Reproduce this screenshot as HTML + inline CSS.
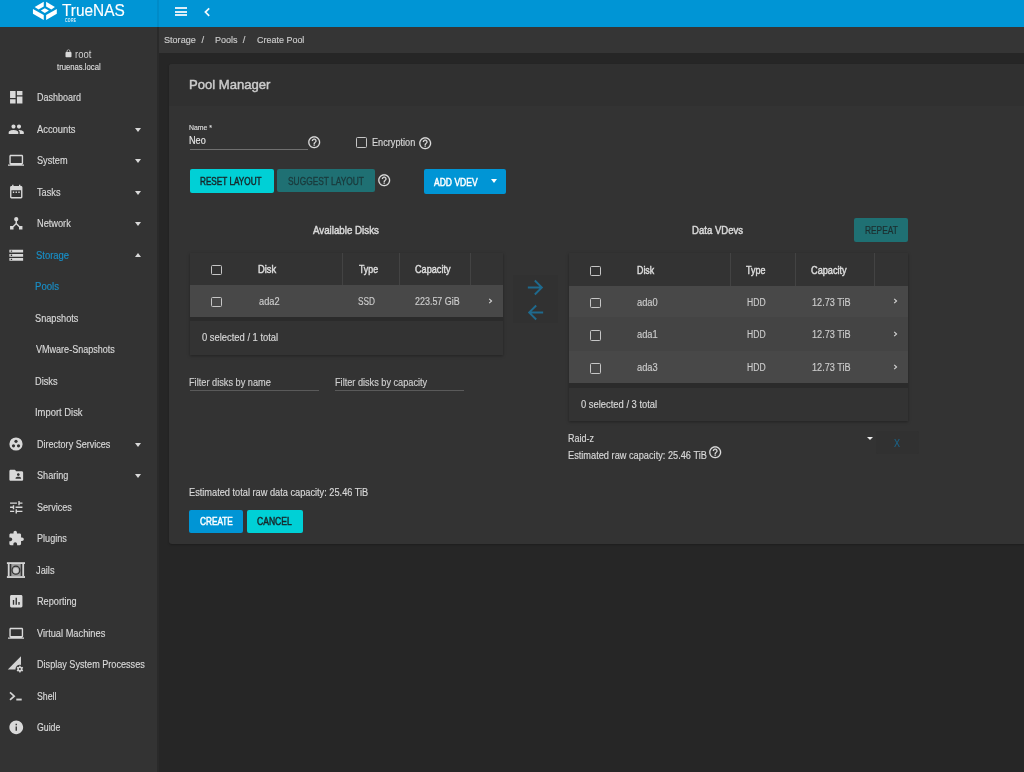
<!DOCTYPE html>
<html><head><meta charset="utf-8">
<style>
*{margin:0;padding:0;box-sizing:border-box}
html,body{width:1024px;height:772px;overflow:hidden;background:#262626;font-family:"Liberation Sans",sans-serif;}
.a{position:absolute;white-space:nowrap}
.r{position:absolute}
</style></head><body><div class="r" style="left:0;top:0;width:1024px;height:772px;will-change:transform">
<div class="r" style="left:0px;top:0px;width:1024px;height:27px;background:#0095d5;"></div>
<div class="r" style="left:0px;top:26.5px;width:1024px;height:1px;background:#2e2a2a;"></div>
<div class="r" style="left:157px;top:0px;width:1.5px;height:26.5px;background:#008bc8;"></div>
<div class="r" style="left:0px;top:27px;width:157px;height:745px;background:#333333;"></div>
<div class="r" style="left:157px;top:27px;width:1.5px;height:745px;background:#2a2a2a;"></div>
<div class="r" style="left:158.5px;top:27px;width:866px;height:25.8px;background:#353535;"></div>
<div class="r" style="left:168.5px;top:64px;width:900px;height:480px;background:#333333;border-radius:3px;box-shadow:0 1px 2px rgba(0,0,0,.25)"></div>
<div class="r" style="left:168.5px;top:64px;width:900px;height:41.5px;background:#303030;border-radius:3px 3px 0 0"></div>
<svg class="a" style="left:0;top:0" width="60" height="22" viewBox="0 0 60 22"><g fill="#ffffff">
<path d="M43.77 1.76 L34.69 7.03 L38.5 9.38 L43.77 6.59 Z"/>
<path d="M46.1 1.76 L54.9 7.03 L51.4 9.38 L46.1 6.59 Z"/>
<path d="M40.84 10.55 L44.8 8.35 L48.9 10.55 L44.8 12.9 Z"/>
<path d="M32.93 9.08 L43.77 14.94 L43.77 19.92 L32.93 13.77 Z"/>
<path d="M46.1 14.94 L56.8 9.08 L56.8 13.77 L46.1 19.92 Z"/>
</g></svg>
<div id="t0" class="a" style="left:62.00px;top:1.6999999999999993px;font-size:17px;line-height:17px;color:#ffffff;font-weight:normal;-webkit-text-stroke:0.15px #ffffff;transform:scaleX(0.9058);transform-origin:0 0;">TrueNAS</div>
<div class="a" style="left:65px;top:18.6px;font-size:8px;line-height:8px;font-weight:bold;color:#d8eef9;letter-spacing:0.6px;transform:scale(0.45,0.58);transform-origin:0 0">CORE</div>
<div class="r" style="left:175px;top:7px;width:12px;height:2px;background:#dcedf7;"></div>
<div class="r" style="left:175px;top:10.6px;width:12px;height:2px;background:#dcedf7;"></div>
<div class="r" style="left:175px;top:14px;width:12px;height:2px;background:#dcedf7;"></div>
<svg class="a" style="left:203px;top:6.5px" width="8" height="10" viewBox="0 0 8 10"><path d="M6.2 1.4 L2.4 5.1 L6.2 8.8" stroke="#f4f9fc" stroke-width="1.7" fill="none"/></svg>
<div id="t1" class="a" style="left:163.83px;top:34.9px;font-size:9.5px;line-height:9.5px;color:#cccccc;font-weight:normal;-webkit-text-stroke:0.15px #cccccc;transform:scaleX(0.9545);transform-origin:0 0;">Storage</div>
<div id="t2" class="a" style="left:201.40px;top:34.9px;font-size:9.5px;line-height:9.5px;color:#cccccc;font-weight:normal;-webkit-text-stroke:0.15px #cccccc;">/</div>
<div id="t3" class="a" style="left:215.00px;top:34.9px;font-size:9.5px;line-height:9.5px;color:#cccccc;font-weight:normal;-webkit-text-stroke:0.15px #cccccc;transform:scaleX(0.9500);transform-origin:0 0;">Pools</div>
<div id="t4" class="a" style="left:242.80px;top:34.9px;font-size:9.5px;line-height:9.5px;color:#cccccc;font-weight:normal;-webkit-text-stroke:0.15px #cccccc;">/</div>
<div id="t5" class="a" style="left:256.81px;top:34.9px;font-size:9.5px;line-height:9.5px;color:#cccccc;font-weight:normal;-webkit-text-stroke:0.15px #cccccc;transform:scaleX(0.9440);transform-origin:0 0;">Create Pool</div>
<svg class="a" style="left:64px;top:49px;" width="9" height="9" viewBox="0 0 24 24"><path fill="#d9d9d9" d="M18 8h-1V6c0-2.76-2.24-5-5-5S7 3.24 7 6v2H6c-1.1 0-2 .9-2 2v10c0 1.1.9 2 2 2h12c1.1 0 2-.9 2-2V10c0-1.1-.9-2-2-2zm-3.1 0H9.1V6c0-1.71 1.39-3.1 2.9-3.1 1.71 0 2.9 1.39 2.9 3.1v2z"/></svg>
<div id="t6" class="a" style="left:75.00px;top:50px;font-size:10px;line-height:10px;color:#d0d0d0;font-weight:normal;-webkit-text-stroke:0.15px #d0d0d0;transform:scaleX(0.9471);transform-origin:0 0;-webkit-text-stroke:0">root</div>
<div id="t7" class="a" style="left:56.53px;top:62.8px;font-size:9px;line-height:9px;color:#dddddd;font-weight:normal;-webkit-text-stroke:0.15px #dddddd;transform:scaleX(0.8569);transform-origin:0 0;">truenas.local</div>
<div id="t8" class="a" style="left:36.81px;top:93.3px;font-size:10px;line-height:10px;color:#d9d9d9;font-weight:normal;-webkit-text-stroke:0.15px #d9d9d9;transform:scaleX(0.9000);transform-origin:0 0;">Dashboard</div>
<svg class="a" style="left:7.8px;top:89.3px;" width="16.5" height="16.5" viewBox="0 0 24 24"><path fill="#d9d9d9" d="M3 13h8V3H3v10zm0 8h8v-6H3v6zm10 0h8V11h-8v10zm0-18v6h8V3h-8z"/></svg>
<div id="t9" class="a" style="left:36.81px;top:124.80000000000001px;font-size:10px;line-height:10px;color:#d9d9d9;font-weight:normal;-webkit-text-stroke:0.15px #d9d9d9;transform:scaleX(0.9366);transform-origin:0 0;">Accounts</div>
<svg class="a" style="left:7.8px;top:120.80000000000001px;" width="16.5" height="16.5" viewBox="0 0 24 24"><path fill="#d9d9d9" d="M16 11c1.66 0 2.99-1.34 2.99-3S17.66 5 16 5c-1.66 0-3 1.34-3 3s1.34 3 3 3zm-8 0c1.66 0 2.99-1.34 2.99-3S9.66 5 8 5C6.34 5 5 6.34 5 8s1.34 3 3 3zm0 2c-2.33 0-7 1.17-7 3.5V19h14v-2.5c0-2.330-4.67-3.5-7-3.5zm8 0c-.29 0-.62.02-.97.05 1.16.84 1.97 1.97 1.97 3.45V19h6v-2.5c0-2.33-4.67-3.5-7-3.5z"/></svg>
<div class="r" style="left:134.8px;top:127.60000000000001px;width:0;height:0;border-left:3.7px solid transparent;border-right:3.7px solid transparent;border-top:4.0px solid #d9d9d9"></div>
<div id="t10" class="a" style="left:36.81px;top:156.3px;font-size:10px;line-height:10px;color:#d9d9d9;font-weight:normal;-webkit-text-stroke:0.15px #d9d9d9;transform:scaleX(0.9182);transform-origin:0 0;">System</div>
<svg class="a" style="left:7.8px;top:152.3px;" width="16.5" height="16.5" viewBox="0 0 24 24"><path fill="#d9d9d9" d="M20 18c1.1 0 1.99-.9 1.99-2L22 6c0-1.1-.9-2-2-2H4c-1.1 0-2 .9-2 2v10c0 1.1.9 2 2 2H0v2h24v-2h-4zM4 6h16v10H4V6z"/></svg>
<div class="r" style="left:134.8px;top:159.10000000000002px;width:0;height:0;border-left:3.7px solid transparent;border-right:3.7px solid transparent;border-top:4.0px solid #d9d9d9"></div>
<div id="t11" class="a" style="left:36.81px;top:187.8px;font-size:10px;line-height:10px;color:#d9d9d9;font-weight:normal;-webkit-text-stroke:0.15px #d9d9d9;transform:scaleX(0.9212);transform-origin:0 0;">Tasks</div>
<svg class="a" style="left:7.8px;top:183.8px;" width="16.5" height="16.5" viewBox="0 0 24 24"><path fill="#d9d9d9" d="M19 3h-1V1h-2v2H8V1H6v2H5c-1.11 0-2 .9-2 2v14c0 1.1.89 2 2 2h14c1.1 0 2-.9 2-2V5c0-1.1-.9-2-2-2zm0 16H5V9h14v10zM7 11h2v2H7zm4 0h2v2h-2zm4 0h2v2h-2z"/></svg>
<div class="r" style="left:134.8px;top:190.60000000000002px;width:0;height:0;border-left:3.7px solid transparent;border-right:3.7px solid transparent;border-top:4.0px solid #d9d9d9"></div>
<div id="t12" class="a" style="left:36.81px;top:219.3px;font-size:10px;line-height:10px;color:#d9d9d9;font-weight:normal;-webkit-text-stroke:0.15px #d9d9d9;transform:scaleX(0.9216);transform-origin:0 0;">Network</div>
<svg class="a" style="left:7.8px;top:215.3px;" width="16.5" height="16.5" viewBox="0 0 24 24"><path fill="#d9d9d9" d="M17 16l-4-4V8.82C14.16 8.4 15 7.3 15 6c0-1.66-1.34-3-3-3S9 4.34 9 6c0 1.3.84 2.4 2 2.82V12l-4 4H3v5h5v-3.05l4-4.2 4 4.2V21h5v-5h-4z"/></svg>
<div class="r" style="left:134.8px;top:222.10000000000002px;width:0;height:0;border-left:3.7px solid transparent;border-right:3.7px solid transparent;border-top:4.0px solid #d9d9d9"></div>
<div id="t13" class="a" style="left:35.86px;top:250.8px;font-size:10px;line-height:10px;color:#1890c9;font-weight:normal;-webkit-text-stroke:0.15px #1890c9;transform:scaleX(0.9455);transform-origin:0 0;">Storage</div>
<svg class="a" style="left:7.8px;top:246.8px;" width="16.5" height="16.5" viewBox="0 0 24 24"><path fill="#d9d9d9" d="M2 20h20v-4H2v4zm2-3h2v2H4v-2zM2 4v4h20V4H2zm4 3H4V5h2v2zm-4 7h20v-4H2v4zm2-3h2v2H4v-2z"/></svg>
<div class="r" style="left:134.8px;top:253.20000000000002px;width:0;height:0;border-left:3.7px solid transparent;border-right:3.7px solid transparent;border-bottom:4.0px solid #d9d9d9"></div>
<div id="t14" class="a" style="left:35.22px;top:282.3px;font-size:10px;line-height:10px;color:#1890c9;font-weight:normal;-webkit-text-stroke:0.15px #1890c9;transform:scaleX(0.9583);transform-origin:0 0;">Pools</div>
<div id="t15" class="a" style="left:35.23px;top:313.8px;font-size:10px;line-height:10px;color:#d9d9d9;font-weight:normal;-webkit-text-stroke:0.15px #d9d9d9;transform:scaleX(0.9191);transform-origin:0 0;">Snapshots</div>
<div id="t16" class="a" style="left:36.14px;top:345.3px;font-size:10px;line-height:10px;color:#d9d9d9;font-weight:normal;-webkit-text-stroke:0.15px #d9d9d9;transform:scaleX(0.9034);transform-origin:0 0;">VMware-Snapshots</div>
<div id="t17" class="a" style="left:35.23px;top:376.8px;font-size:10px;line-height:10px;color:#d9d9d9;font-weight:normal;-webkit-text-stroke:0.15px #d9d9d9;transform:scaleX(0.9250);transform-origin:0 0;">Disks</div>
<div id="t18" class="a" style="left:35.22px;top:408.3px;font-size:10px;line-height:10px;color:#d9d9d9;font-weight:normal;-webkit-text-stroke:0.15px #d9d9d9;transform:scaleX(0.9400);transform-origin:0 0;">Import Disk</div>
<div id="t19" class="a" style="left:36.81px;top:439.8px;font-size:10px;line-height:10px;color:#d9d9d9;font-weight:normal;-webkit-text-stroke:0.15px #d9d9d9;transform:scaleX(0.9037);transform-origin:0 0;">Directory Services</div>
<svg class="a" style="left:8.5px;top:436.8px" width="14" height="14" viewBox="0 0 14 14"><circle cx="7" cy="7" r="6.6" fill="#d9d9d9"/><circle cx="7" cy="4.3" r="1.6" fill="#333"/><circle cx="4.5" cy="8.8" r="1.6" fill="#333"/><circle cx="9.5" cy="8.8" r="1.6" fill="#333"/></svg>
<div class="r" style="left:134.8px;top:442.6px;width:0;height:0;border-left:3.7px solid transparent;border-right:3.7px solid transparent;border-top:4.0px solid #d9d9d9"></div>
<div id="t20" class="a" style="left:36.81px;top:471.3px;font-size:10px;line-height:10px;color:#d9d9d9;font-weight:normal;-webkit-text-stroke:0.15px #d9d9d9;transform:scaleX(0.9118);transform-origin:0 0;">Sharing</div>
<svg class="a" style="left:7.8px;top:467.3px;" width="16.5" height="16.5" viewBox="0 0 24 24"><path fill="#d9d9d9" d="M20 6h-8l-2-2H4c-1.1 0-1.99.9-1.99 2L2 18c0 1.1.9 2 2 2h16c1.1 0 2-.9 2-2V8c0-1.1-.9-2-2-2zm-5 3c1.1 0 2 .9 2 2s-.9 2-2 2-2-.9-2-2 .9-2 2-2zm4 8h-8v-1c0-1.33 2.67-2 4-2s4 .67 4 2v1z"/></svg>
<div class="r" style="left:134.8px;top:474.1px;width:0;height:0;border-left:3.7px solid transparent;border-right:3.7px solid transparent;border-top:4.0px solid #d9d9d9"></div>
<div id="t21" class="a" style="left:36.81px;top:502.8px;font-size:10px;line-height:10px;color:#d9d9d9;font-weight:normal;-webkit-text-stroke:0.15px #d9d9d9;transform:scaleX(0.9079);transform-origin:0 0;">Services</div>
<svg class="a" style="left:7.8px;top:498.8px;" width="16.5" height="16.5" viewBox="0 0 24 24"><path fill="#d9d9d9" d="M3 17v2h6v-2H3zM3 5v2h10V5H3zm10 16v-2h8v-2h-8v-2h-2v6h2zM7 9v2H3v2h4v2h2V9H7zm14 4v-2H11v2h10zm-6-4h2V7h4V5h-4V3h-2v6z"/></svg>
<div id="t22" class="a" style="left:36.81px;top:534.3px;font-size:10px;line-height:10px;color:#d9d9d9;font-weight:normal;-webkit-text-stroke:0.15px #d9d9d9;transform:scaleX(0.9091);transform-origin:0 0;">Plugins</div>
<svg class="a" style="left:7.8px;top:530.3px;" width="16.5" height="16.5" viewBox="0 0 24 24"><path fill="#d9d9d9" d="M20.5 11H19V7c0-1.1-.9-2-2-2h-4V3.5C13 2.12 11.88 1 10.5 1S8 2.120 8 3.5V5H4c-1.1 0-1.99.9-1.99 2v3.8H3.5c1.49 0 2.7 1.21 2.7 2.7s-1.21 2.7-2.7 2.7H2V20c0 1.1.9 2 2 2h3.8v-1.5c0-1.49 1.21-2.7 2.7-2.7 1.49 0 2.7 1.21 2.7 2.7V22H17c1.1 0 2-.9 2-2v-4h1.5c1.38 0 2.5-1.12 2.5-2.5S21.88 11 20.5 11z"/></svg>
<div id="t23" class="a" style="left:35.77px;top:565.8px;font-size:10px;line-height:10px;color:#d9d9d9;font-weight:normal;-webkit-text-stroke:0.15px #d9d9d9;transform:scaleX(0.9286);transform-origin:0 0;">Jails</div>
<svg class="a" style="left:0;top:559.8px" width="30" height="22" viewBox="0 559.8 30 22"><g fill="#d4d4d4">
<rect x="6.9" y="562" width="18.1" height="1.8"/><rect x="6.9" y="575.9" width="18.1" height="1.85"/>
<rect x="7.8" y="563.8" width="1.8" height="12.1"/><rect x="22.3" y="563.8" width="1.8" height="12.1"/>
<rect x="11.3" y="563.8" width="9.4" height="12.1" fill="#9c9c9c"/></g>
<ellipse cx="15.9" cy="570" rx="3.9" ry="4.0" fill="none" stroke="#2e2e2e" stroke-width="1.2"/>
<circle cx="15.8" cy="570.3" r="2.7" fill="#d0d0d0"/>
</svg>
<div id="t24" class="a" style="left:36.81px;top:597.3px;font-size:10px;line-height:10px;color:#d9d9d9;font-weight:normal;-webkit-text-stroke:0.15px #d9d9d9;transform:scaleX(0.9151);transform-origin:0 0;">Reporting</div>
<svg class="a" style="left:7.8px;top:593.3px;" width="16.5" height="16.5" viewBox="0 0 24 24"><path fill="#d9d9d9" d="M19 3H5c-1.1 0-2 .9-2 2v14c0 1.1.9 2 2 2h14c1.1 0 2-.9 2-2V5c0-1.1-.9-2-2-2zM9 17H7v-7h2v7zm4 0h-2V7h2v10zm4 0h-2v-4h2v4z"/></svg>
<div id="t25" class="a" style="left:36.81px;top:628.8px;font-size:10px;line-height:10px;color:#d9d9d9;font-weight:normal;-webkit-text-stroke:0.15px #d9d9d9;transform:scaleX(0.9257);transform-origin:0 0;">Virtual Machines</div>
<svg class="a" style="left:7.8px;top:624.8px;" width="16.5" height="16.5" viewBox="0 0 24 24"><path fill="#d9d9d9" d="M20 18c1.1 0 1.99-.9 1.99-2L22 6c0-1.1-.9-2-2-2H4c-1.1 0-2 .9-2 2v10c0 1.1.9 2 2 2H0v2h24v-2h-4zM4 6h16v10H4V6z"/></svg>
<div id="t26" class="a" style="left:36.81px;top:660.3px;font-size:10px;line-height:10px;color:#d9d9d9;font-weight:normal;-webkit-text-stroke:0.15px #d9d9d9;transform:scaleX(0.9102);transform-origin:0 0;">Display System Processes</div>
<svg class="a" style="left:0;top:654.3px" width="30" height="22" viewBox="0 654.3 30 22">
<path fill="#d4d4d4" d="M7.8 669.7 L21 656.5 L21 669.7 Z"/>
<circle cx="19.9" cy="669.4" r="4.4" fill="#333333"/>
<g fill="#d4d4d4" transform="translate(19.9 669.4)">
<circle r="2.6"/><rect x="-0.7" y="-3.4" width="1.4" height="6.8"/><rect x="-0.7" y="-3.4" width="1.4" height="6.8" transform="rotate(60)"/><rect x="-0.7" y="-3.4" width="1.4" height="6.8" transform="rotate(120)"/>
</g><circle cx="19.9" cy="669.4" r="1.0" fill="#333333"/>
</svg>
<div id="t27" class="a" style="left:36.81px;top:691.8px;font-size:10px;line-height:10px;color:#d9d9d9;font-weight:normal;-webkit-text-stroke:0.15px #d9d9d9;transform:scaleX(0.8773);transform-origin:0 0;">Shell</div>
<svg class="a" style="left:0;top:685.8px" width="30" height="22" viewBox="0 685.8 30 22">
<path d="M10 692.2 L14.2 696 L10 699.7" stroke="#d4d4d4" stroke-width="1.7" fill="none"/>
<rect x="16.3" y="698.4" width="5.4" height="1.9" fill="#d4d4d4"/>
</svg>
<div id="t28" class="a" style="left:36.81px;top:723.3px;font-size:10px;line-height:10px;color:#d9d9d9;font-weight:normal;-webkit-text-stroke:0.15px #d9d9d9;transform:scaleX(0.8741);transform-origin:0 0;">Guide</div>
<svg class="a" style="left:7.8px;top:719.3px;" width="16.5" height="16.5" viewBox="0 0 24 24"><path fill="#d9d9d9" d="M12 2C6.48 2 2 6.48 2 12s4.48 10 10 10 10-4.48 10-10S17.52 2 12 2zm1 15h-2v-6h2v6zm0-8h-2V7h2v2z"/></svg>
<div id="t29" class="a" style="left:189.20px;top:78.3px;font-size:13px;line-height:13px;color:#cccccc;font-weight:normal;-webkit-text-stroke:0.45px #cccccc;transform:scaleX(1.0049);transform-origin:0 0;">Pool Manager</div>
<div id="t30" class="a" style="left:189.42px;top:124.19999999999999px;font-size:7.5px;line-height:7.5px;color:#dddddd;font-weight:normal;-webkit-text-stroke:0.15px #dddddd;transform:scaleX(0.9200);transform-origin:0 0;">Name *</div>
<div id="t31" class="a" style="left:189.43px;top:136.2px;font-size:10px;line-height:10px;color:#e6e6e6;font-weight:normal;-webkit-text-stroke:0.15px #e6e6e6;transform:scaleX(0.9111);transform-origin:0 0;">Neo</div>
<div class="r" style="left:189.5px;top:148.8px;width:118px;height:1px;background:#707070;"></div>
<svg class="a" style="left:307px;top:134.8px;" width="14.4" height="14.4" viewBox="0 0 24 24"><path fill="#dddddd" stroke="#dddddd" stroke-width="0.25" d="M11 18h2v-2h-2v2zm1-16C6.48 2 2 6.48 2 12s4.48 10 10 10 10-4.480 10-10S17.52 2 12 2zm0 18c-4.41 0-8-3.59-8-8s3.59-8 8-8 8 3.59 8 8-3.59 8-8 8zm0-14c-2.21 0-4 1.79-4 4h2c0-1.1.9-2 2-2s2 .9 2 2c0 2-3 1.75-3 5h2c0-2.25 3-2.5 3-5 0-2.21-1.79-4-4-4z"/></svg>
<div class="r" style="left:356px;top:137px;width:10.5px;height:10.5px;border:1.8px solid #c6c6c6;border-radius:1.5px"></div>
<div id="t32" class="a" style="left:372.04px;top:138px;font-size:10px;line-height:10px;color:#d9d9d9;font-weight:normal;-webkit-text-stroke:0.15px #d9d9d9;transform:scaleX(0.9149);transform-origin:0 0;">Encryption</div>
<svg class="a" style="left:417.8px;top:136.3px;" width="14.4" height="14.4" viewBox="0 0 24 24"><path fill="#dddddd" stroke="#dddddd" stroke-width="0.25" d="M11 18h2v-2h-2v2zm1-16C6.48 2 2 6.48 2 12s4.48 10 10 10 10-4.480 10-10S17.52 2 12 2zm0 18c-4.41 0-8-3.59-8-8s3.59-8 8-8 8 3.59 8 8-3.59 8-8 8zm0-14c-2.21 0-4 1.79-4 4h2c0-1.1.9-2 2-2s2 .9 2 2c0 2-3 1.75-3 5h2c0-2.25 3-2.5 3-5 0-2.21-1.79-4-4-4z"/></svg>
<div class="r" style="left:189.5px;top:169px;width:84.5px;height:23.5px;background:#00d0d6;border-radius:2px"></div>
<div id="t33" class="a" style="left:200.00px;top:176.6px;font-size:10px;line-height:10px;color:#17262a;font-weight:normal;-webkit-text-stroke:0.45px #17262a;transform:scaleX(0.8182);transform-origin:0 0;">RESET LAYOUT</div>
<div class="r" style="left:277.2px;top:168.8px;width:97.5px;height:23.5px;background:#1f7073;border-radius:2px"></div>
<div id="t34" class="a" style="left:287.63px;top:176.6px;font-size:10px;line-height:10px;color:#1a3a3c;font-weight:normal;-webkit-text-stroke:0.3px #1a3a3c;transform:scaleX(0.8370);transform-origin:0 0;">SUGGEST LAYOUT</div>
<svg class="a" style="left:377px;top:173px;" width="14.4" height="14.4" viewBox="0 0 24 24"><path fill="#dddddd" stroke="#dddddd" stroke-width="0.25" d="M11 18h2v-2h-2v2zm1-16C6.48 2 2 6.48 2 12s4.48 10 10 10 10-4.480 10-10S17.52 2 12 2zm0 18c-4.41 0-8-3.59-8-8s3.59-8 8-8 8 3.59 8 8-3.59 8-8 8zm0-14c-2.21 0-4 1.79-4 4h2c0-1.1.9-2 2-2s2 .9 2 2c0 2-3 1.75-3 5h2c0-2.25 3-2.5 3-5 0-2.21-1.79-4-4-4z"/></svg>
<div class="r" style="left:423.8px;top:169px;width:82.3px;height:25px;background:#0095d5;border-radius:2px"></div>
<div id="t35" class="a" style="left:434.00px;top:177.6px;font-size:10px;line-height:10px;color:#ffffff;font-weight:normal;-webkit-text-stroke:0.45px #ffffff;transform:scaleX(0.8529);transform-origin:0 0;">ADD VDEV</div>
<div class="r" style="left:490.8px;top:179.4px;width:0;height:0;border-left:3.8px solid transparent;border-right:3.8px solid transparent;border-top:4.0px solid #ffffff"></div>
<div id="t36" class="a" style="left:313.00px;top:226px;font-size:10px;line-height:10px;color:#d9d9d9;font-weight:normal;-webkit-text-stroke:0.45px #d9d9d9;transform:scaleX(0.9743);transform-origin:0 0;">Available Disks</div>
<div id="t37" class="a" style="left:691.51px;top:226px;font-size:10px;line-height:10px;color:#d9d9d9;font-weight:normal;-webkit-text-stroke:0.45px #d9d9d9;transform:scaleX(0.9575);transform-origin:0 0;">Data VDevs</div>
<div class="r" style="left:854px;top:218.3px;width:54px;height:23.4px;background:#1f7073;border-radius:2px"></div>
<div id="t38" class="a" style="left:864.53px;top:225.9px;font-size:10px;line-height:10px;color:#1c2f30;font-weight:normal;-webkit-text-stroke:0.2px #1c2f30;transform:scaleX(0.8359);transform-origin:0 0;">REPEAT</div>
<div class="r" style="left:189.5px;top:252.5px;width:313.2px;height:102.5px;background:#2b2b2b;box-shadow:0 1px 3px rgba(0,0,0,.35)"></div>
<div class="r" style="left:189.5px;top:252.5px;width:313.2px;height:32.10000000000002px;background:#333333;"></div>
<div class="r" style="left:342px;top:252.5px;width:1px;height:32.10000000000002px;background:#434343;"></div>
<div class="r" style="left:399px;top:252.5px;width:1px;height:32.10000000000002px;background:#434343;"></div>
<div class="r" style="left:470px;top:252.5px;width:1px;height:32.10000000000002px;background:#434343;"></div>
<div class="r" style="left:211px;top:264.85px;width:10.5px;height:10.5px;border:1.8px solid #c6c6c6;border-radius:1.5px"></div>
<div id="t39" class="a" style="left:257.84px;top:265.2px;font-size:10px;line-height:10px;color:#dddddd;font-weight:normal;-webkit-text-stroke:0.45px #dddddd;transform:scaleX(0.9368);transform-origin:0 0;">Disk</div>
<div id="t40" class="a" style="left:358.75px;top:265.2px;font-size:10px;line-height:10px;color:#dddddd;font-weight:normal;-webkit-text-stroke:0.45px #dddddd;transform:scaleX(0.8773);transform-origin:0 0;">Type</div>
<div id="t41" class="a" style="left:415.00px;top:265.2px;font-size:10px;line-height:10px;color:#dddddd;font-weight:normal;-webkit-text-stroke:0.45px #dddddd;transform:scaleX(0.9128);transform-origin:0 0;">Capacity</div>
<div class="r" style="left:189.5px;top:284.6px;width:313.2px;height:32.39999999999998px;background:#484848;"></div>
<div class="r" style="left:211px;top:296.70000000000005px;width:10.5px;height:10.5px;border:1.8px solid #c6c6c6;border-radius:1.5px"></div>
<div id="t42" class="a" style="left:258.81px;top:297.1px;font-size:10px;line-height:10px;color:#cccccc;font-weight:normal;-webkit-text-stroke:0.15px #cccccc;transform:scaleX(0.9227);transform-origin:0 0;">ada2</div>
<div id="t43" class="a" style="left:358.45px;top:297.1px;font-size:10px;line-height:10px;color:#cccccc;font-weight:normal;-webkit-text-stroke:0.15px #cccccc;transform:scaleX(0.8250);transform-origin:0 0;">SSD</div>
<div id="t44" class="a" style="left:415.24px;top:297.1px;font-size:10px;line-height:10px;color:#cccccc;font-weight:normal;-webkit-text-stroke:0.15px #cccccc;transform:scaleX(0.8940);transform-origin:0 0;">223.57 GiB</div>
<svg class="a" style="left:487.75px;top:297.6px" width="5" height="6" viewBox="0 0 5 6"><path d="M1.2 0.8 L3.6 3 L1.2 5.2" stroke="#d6d6d6" stroke-width="1.05" fill="none"/></svg>
<div class="r" style="left:189.5px;top:321px;width:313.2px;height:34px;background:#333333;"></div>
<div id="t45" class="a" style="left:202.00px;top:333px;font-size:10px;line-height:10px;color:#d9d9d9;font-weight:normal;-webkit-text-stroke:0.15px #d9d9d9;transform:scaleX(0.9383);transform-origin:0 0;">0 selected / 1 total</div>
<div class="r" style="left:568.75px;top:253px;width:338.75px;height:167.60000000000002px;background:#2b2b2b;box-shadow:0 1px 3px rgba(0,0,0,.35)"></div>
<div class="r" style="left:568.75px;top:253px;width:338.75px;height:33px;background:#333333;"></div>
<div class="r" style="left:730px;top:253px;width:1px;height:33px;background:#434343;"></div>
<div class="r" style="left:795px;top:253px;width:1px;height:33px;background:#434343;"></div>
<div class="r" style="left:874px;top:253px;width:1px;height:33px;background:#434343;"></div>
<div class="r" style="left:590px;top:265.8px;width:10.5px;height:10.5px;border:1.8px solid #c6c6c6;border-radius:1.5px"></div>
<div id="t46" class="a" style="left:637.43px;top:266.15px;font-size:10px;line-height:10px;color:#dddddd;font-weight:normal;-webkit-text-stroke:0.45px #dddddd;transform:scaleX(0.8850);transform-origin:0 0;">Disk</div>
<div id="t47" class="a" style="left:746.33px;top:266.15px;font-size:10px;line-height:10px;color:#dddddd;font-weight:normal;-webkit-text-stroke:0.45px #dddddd;transform:scaleX(0.8955);transform-origin:0 0;">Type</div>
<div id="t48" class="a" style="left:811.00px;top:266.15px;font-size:10px;line-height:10px;color:#dddddd;font-weight:normal;-webkit-text-stroke:0.45px #dddddd;transform:scaleX(0.9179);transform-origin:0 0;">Capacity</div>
<div class="r" style="left:568.75px;top:286px;width:338.75px;height:31.30000000000001px;background:#484848;"></div>
<div class="r" style="left:590px;top:297.55px;width:10.5px;height:10.5px;border:1.8px solid #c6c6c6;border-radius:1.5px"></div>
<div id="t49" class="a" style="left:637.42px;top:297.95px;font-size:10px;line-height:10px;color:#cccccc;font-weight:normal;-webkit-text-stroke:0.15px #cccccc;transform:scaleX(0.9318);transform-origin:0 0;">ada0</div>
<div id="t50" class="a" style="left:746.63px;top:297.95px;font-size:10px;line-height:10px;color:#cccccc;font-weight:normal;-webkit-text-stroke:0.15px #cccccc;transform:scaleX(0.8571);transform-origin:0 0;">HDD</div>
<div id="t51" class="a" style="left:811.62px;top:297.95px;font-size:10px;line-height:10px;color:#cccccc;font-weight:normal;-webkit-text-stroke:0.15px #cccccc;transform:scaleX(0.9119);transform-origin:0 0;">12.73 TiB</div>
<svg class="a" style="left:892.6px;top:298.45px" width="5" height="6" viewBox="0 0 5 6"><path d="M1.2 0.8 L3.6 3 L1.2 5.2" stroke="#d6d6d6" stroke-width="1.05" fill="none"/></svg>
<div class="r" style="left:568.75px;top:317.3px;width:338.75px;height:33.69999999999999px;background:#444444;"></div>
<div class="r" style="left:590px;top:330.05px;width:10.5px;height:10.5px;border:1.8px solid #c6c6c6;border-radius:1.5px"></div>
<div id="t52" class="a" style="left:637.42px;top:330.45px;font-size:10px;line-height:10px;color:#cccccc;font-weight:normal;-webkit-text-stroke:0.15px #cccccc;transform:scaleX(0.9318);transform-origin:0 0;">ada1</div>
<div id="t53" class="a" style="left:746.63px;top:330.45px;font-size:10px;line-height:10px;color:#cccccc;font-weight:normal;-webkit-text-stroke:0.15px #cccccc;transform:scaleX(0.8571);transform-origin:0 0;">HDD</div>
<div id="t54" class="a" style="left:811.62px;top:330.45px;font-size:10px;line-height:10px;color:#cccccc;font-weight:normal;-webkit-text-stroke:0.15px #cccccc;transform:scaleX(0.9119);transform-origin:0 0;">12.73 TiB</div>
<svg class="a" style="left:892.6px;top:330.95px" width="5" height="6" viewBox="0 0 5 6"><path d="M1.2 0.8 L3.6 3 L1.2 5.2" stroke="#d6d6d6" stroke-width="1.05" fill="none"/></svg>
<div class="r" style="left:568.75px;top:351px;width:338.75px;height:32.19999999999999px;background:#484848;"></div>
<div class="r" style="left:590px;top:363.00000000000006px;width:10.5px;height:10.5px;border:1.8px solid #c6c6c6;border-radius:1.5px"></div>
<div id="t55" class="a" style="left:637.42px;top:363.40000000000003px;font-size:10px;line-height:10px;color:#cccccc;font-weight:normal;-webkit-text-stroke:0.15px #cccccc;transform:scaleX(0.9318);transform-origin:0 0;">ada3</div>
<div id="t56" class="a" style="left:746.63px;top:363.40000000000003px;font-size:10px;line-height:10px;color:#cccccc;font-weight:normal;-webkit-text-stroke:0.15px #cccccc;transform:scaleX(0.8571);transform-origin:0 0;">HDD</div>
<div id="t57" class="a" style="left:811.62px;top:363.40000000000003px;font-size:10px;line-height:10px;color:#cccccc;font-weight:normal;-webkit-text-stroke:0.15px #cccccc;transform:scaleX(0.9119);transform-origin:0 0;">12.73 TiB</div>
<svg class="a" style="left:892.6px;top:363.90000000000003px" width="5" height="6" viewBox="0 0 5 6"><path d="M1.2 0.8 L3.6 3 L1.2 5.2" stroke="#d6d6d6" stroke-width="1.05" fill="none"/></svg>
<div class="r" style="left:568.75px;top:387.7px;width:338.75px;height:32.900000000000034px;background:#333333;"></div>
<div id="t58" class="a" style="left:581.00px;top:399.7px;font-size:10px;line-height:10px;color:#d9d9d9;font-weight:normal;-webkit-text-stroke:0.15px #d9d9d9;transform:scaleX(0.9383);transform-origin:0 0;">0 selected / 3 total</div>
<div class="r" style="left:513px;top:274.7px;width:45px;height:48.8px;background:#313131;"></div>
<svg class="a" style="left:523.9px;top:276.4px;" width="23" height="23" viewBox="0 0 24 24"><path fill="#1f6a8e" d="M12 4l-1.41 1.41L16.17 11H4v2h12.17l-5.58 5.59L12 20l8-8z"/></svg>
<svg class="a" style="left:524px;top:301px;" width="23" height="23" viewBox="0 0 24 24"><path fill="#1f6a8e" d="M20 11H7.83l5.59-5.59L12 4l-8 8 8 8 1.41-1.41L7.83 13H20v-2z"/></svg>
<div id="t59" class="a" style="left:189.04px;top:377.6px;font-size:10px;line-height:10px;color:#d0d0d0;font-weight:normal;-webkit-text-stroke:0.15px #d0d0d0;transform:scaleX(0.9205);transform-origin:0 0;">Filter disks by name</div>
<div class="r" style="left:189.5px;top:390px;width:129px;height:1px;background:#5a5a5a;"></div>
<div id="t60" class="a" style="left:335.00px;top:377.6px;font-size:10px;line-height:10px;color:#d0d0d0;font-weight:normal;-webkit-text-stroke:0.15px #d0d0d0;transform:scaleX(0.9158);transform-origin:0 0;">Filter disks by capacity</div>
<div class="r" style="left:335px;top:390px;width:129px;height:1px;background:#5a5a5a;"></div>
<div id="t61" class="a" style="left:568.24px;top:433.8px;font-size:10px;line-height:10px;color:#d9d9d9;font-weight:normal;-webkit-text-stroke:0.15px #d9d9d9;transform:scaleX(0.8964);transform-origin:0 0;">Raid-z</div>
<div class="r" style="left:866.8px;top:436.7px;width:0;height:0;border-left:3.2px solid transparent;border-right:3.2px solid transparent;border-top:3.8px solid #eeeeee"></div>
<div class="r" style="left:875.5px;top:431px;width:43.2px;height:23.3px;background:#313131;border-radius:2px"></div>
<div id="t62" class="a" style="left:894.25px;top:439px;font-size:10px;line-height:10px;color:#1d6285;font-weight:normal;-webkit-text-stroke:0.15px #1d6285;transform:scaleX(0.9000);transform-origin:0 0;">X</div>
<div id="t63" class="a" style="left:568.23px;top:450.5px;font-size:10px;line-height:10px;color:#d9d9d9;font-weight:normal;-webkit-text-stroke:0.15px #d9d9d9;transform:scaleX(0.9220);transform-origin:0 0;">Estimated raw capacity: 25.46 TiB</div>
<svg class="a" style="left:708.3px;top:445px;" width="14.4" height="14.4" viewBox="0 0 24 24"><path fill="#dddddd" stroke="#dddddd" stroke-width="0.25" d="M11 18h2v-2h-2v2zm1-16C6.48 2 2 6.48 2 12s4.48 10 10 10 10-4.480 10-10S17.52 2 12 2zm0 18c-4.41 0-8-3.59-8-8s3.59-8 8-8 8 3.59 8 8-3.59 8-8 8zm0-14c-2.21 0-4 1.79-4 4h2c0-1.1.9-2 2-2s2 .9 2 2c0 2-3 1.75-3 5h2c0-2.25 3-2.5 3-5 0-2.21-1.79-4-4-4z"/></svg>
<div id="t64" class="a" style="left:189.04px;top:487.8px;font-size:10px;line-height:10px;color:#d9d9d9;font-weight:normal;-webkit-text-stroke:0.15px #d9d9d9;transform:scaleX(0.9214);transform-origin:0 0;">Estimated total raw data capacity: 25.46 TiB</div>
<div class="r" style="left:189.2px;top:509.5px;width:54px;height:23.5px;background:#0095d5;border-radius:2px"></div>
<div id="t65" class="a" style="left:200.00px;top:517px;font-size:10px;line-height:10px;color:#ffffff;font-weight:normal;-webkit-text-stroke:0.45px #ffffff;transform:scaleX(0.8250);transform-origin:0 0;">CREATE</div>
<div class="r" style="left:246.8px;top:509.5px;width:56px;height:23.5px;background:#00d0d6;border-radius:2px"></div>
<div id="t66" class="a" style="left:257.07px;top:517px;font-size:10px;line-height:10px;color:#17262a;font-weight:normal;-webkit-text-stroke:0.45px #17262a;transform:scaleX(0.8562);transform-origin:0 0;">CANCEL</div>
</div></body></html>
